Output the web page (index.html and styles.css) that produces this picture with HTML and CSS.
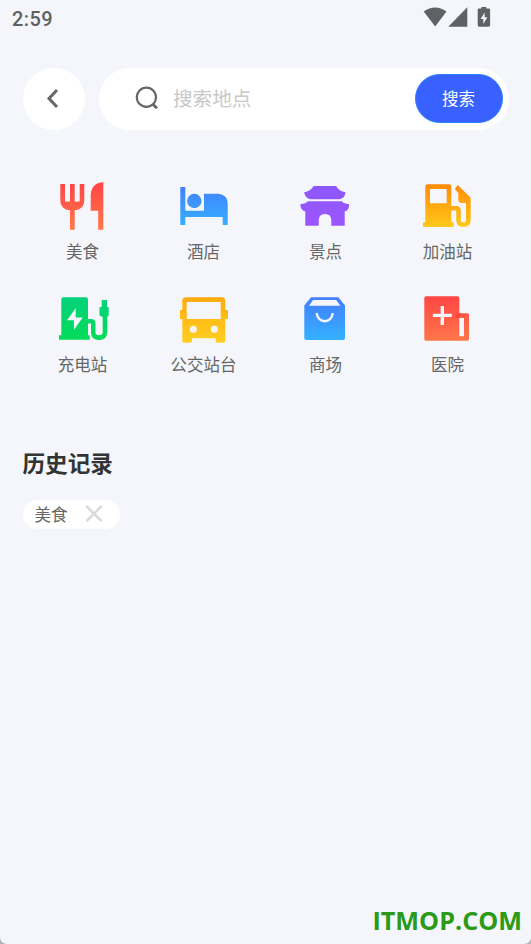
FILE: index.html
```html
<!DOCTYPE html>
<html lang="zh-CN">
<head>
<meta charset="utf-8">
<title>搜索地点</title>
<link rel="stylesheet" href="styles.css">
</head>
<body>
<div class="screen">
  <header class="status">
    <span class="time">2:59</span>
    <svg class="status-icons" width="70" height="22" viewBox="0 0 70 22" fill="#606164">
      <path d="M1.700 5.500Q13-2.500 24.500 5.500L13.200 20.500Z"/>
      <path d="M45.300 1.300V20.700H26.300Z"/>
      <path fill-rule="evenodd" d="M59.400 1h4.800v1.600h2.500q1.400 0 1.400 1.400V19.300q0 1.400-1.400 1.400h-9.600q-1.400 0-1.400-1.400V4q0-1.400 1.400-1.400h2.300ZM62.600 6.500L58.600 13H61.300v5L65.400 11.300h-2.800Z"/>
    </svg>
  </header>

  <div class="search-row">
    <button class="back" aria-label="返回">
      <svg width="20" height="24" viewBox="0 0 20 24" fill="none" stroke="#666" stroke-width="3"><path d="M13 3L5 11.500L13 20"/></svg>
    </button>
    <div class="search-box">
      <svg width="26" height="26" viewBox="0 0 26 26" fill="none" stroke="#666" stroke-width="2.200"><circle cx="12.400" cy="11.300" r="9.600"/><path d="M18.600 18L23 22.300" stroke-width="3"/></svg>
      <span class="placeholder">搜索地点</span>
      <button class="submit">搜索</button>
    </div>
  </div>

  <svg class="defs" width="0" height="0">
    <defs>
      <linearGradient id="red" gradientUnits="userSpaceOnUse" x1="0" y1="5" x2="0" y2="51"><stop stop-color="#ff4545"/><stop offset="1" stop-color="#ff7849"/></linearGradient>
      <linearGradient id="blue" gradientUnits="userSpaceOnUse" x1="0" y1="7" x2="0" y2="49"><stop stop-color="#427fff"/><stop offset="1" stop-color="#35b1ff"/></linearGradient>
      <linearGradient id="purple" gradientUnits="userSpaceOnUse" x1="0" y1="8" x2="0" y2="48"><stop stop-color="#8c58fc"/><stop offset="1" stop-color="#9e55ff"/></linearGradient>
      <linearGradient id="orange" gradientUnits="userSpaceOnUse" x1="0" y1="6" x2="0" y2="49"><stop stop-color="#ff8a06"/><stop offset="1" stop-color="#ffc81c"/></linearGradient>
      <linearGradient id="green" gradientUnits="userSpaceOnUse" x1="0" y1="6" x2="0" y2="49"><stop stop-color="#04d17b"/><stop offset="1" stop-color="#04dc58"/></linearGradient>
      <linearGradient id="amber" gradientUnits="userSpaceOnUse" x1="0" y1="6" x2="0" y2="52"><stop stop-color="#ffaa0d"/><stop offset="1" stop-color="#ffd022"/></linearGradient>
    </defs>
  </svg>

  <nav class="categories">
    <a class="category">
      <svg class="icon" viewBox="0 0 60 56" fill="url(#red)"><path d="M8.300 6H13V23.500H18V6H22.700V23.500H27.700V6H32.300V22.500Q32.300 31.500 22.700 32.300V51.700H18V32.300Q8.300 31.500 8.300 22.500ZM51.300 4.300V51.700H46.200V32.700H38.700V17Q39.500 5 51.300 4.300Z"/></svg>
      <span>美食</span>
    </a>
    <a class="category">
      <svg class="icon" viewBox="0 0 60 56" fill="url(#blue)"><path d="M7.300 9H12.300V32.700H31V15.700H45Q54.700 16.500 54.700 26V47H49.700V39H12.300V47H7.300Z"/><circle cx="21.300" cy="23" r="7.200"/></svg>
      <span>酒店</span>
    </a>
    <a class="category">
      <svg class="icon" viewBox="0 0 60 56" fill="url(#purple)"><path d="M18.700 8H41Q44 13.500 50.500 14.200Q50 20.500 44.300 21.300H15.700Q10 20.500 9.200 14.200Q15.500 13.500 18.700 8ZM13 23.300H46.700Q49.500 26.700 54 26Q54.500 32 49.700 33.500V47.700H36.300V42Q36 36 30 36Q24 36 23.700 42V47.700H10.300V33.500Q5 32 5.500 26Q10 26.700 13 23.300Z"/></svg>
      <span>景点</span>
    </a>
    <a class="category">
      <svg class="icon" viewBox="0 0 60 56" fill="url(#orange)"><path fill-rule="evenodd" d="M10.500 6.300H32Q34.300 6.300 34.300 8.500V28H39.500Q43.800 28 43.800 32.500V42Q43.800 44.500 46.400 44.500Q49 44.500 49 42V25H44Q41.300 24.500 41.300 22V15L37.800 11L40.700 7L52.500 18.500Q53.700 19.700 53.700 21.500V42Q53.700 49 46.400 49Q39.200 49 39.200 42V32.500H34.300V44.300H35.500Q36.700 44.300 36.700 45.500V49H6V45.500Q6 44.300 7.200 44.300H8.300V8.500Q8.300 6.300 10.500 6.300ZM13 11V25.300H29.700V11Z"/></svg>
      <span>加油站</span>
    </a>
    <a class="category">
      <svg class="icon" viewBox="0 0 60 56" fill="url(#green)"><path fill-rule="evenodd" d="M11.500 6.300H34Q36 6.300 36 8.500V28H39Q43.500 28 43.500 32.500V41.500Q43.500 44.300 47 44.300Q50.700 44.300 50.700 41V26L47.500 24.500V16H49.700V9H55V16H56.700V24.500L55.300 26V41Q55.300 48.900 47 48.900Q39 48.900 39 41.500V32.500H36V44.300H37.700V48.700H7V44.300H9.300V8.500Q9.300 6.300 11.500 6.300ZM23.700 17.300L15 29.300H22V38.700L30.700 26.500H23.700Z"/></svg>
      <span>充电站</span>
    </a>
    <a class="category">
      <svg class="icon" viewBox="0 0 60 56" fill="url(#amber)"><path fill-rule="evenodd" d="M13 6.300H48.500Q52.300 6.300 52.300 10V19H55V28H52.300V50Q52.300 51.700 50.500 51.700H44.500Q42.700 51.700 42.700 50V47.300H19V50Q19 51.700 17.200 51.700H11Q9.300 51.700 9.300 50V28H7V19H9.300V10Q9.300 6.300 13 6.300ZM13.700 11V28H47.700V11ZM16.800 38.300a3.500 3.500 0 1 0 7 0a3.500 3.500 0 1 0-7 0M37.800 38.300a3.500 3.500 0 1 0 7 0a3.500 3.500 0 1 0-7 0"/></svg>
      <span>公交站台</span>
    </a>
    <a class="category">
      <svg class="icon" viewBox="0 0 60 56" fill="url(#blue)"><path fill-rule="evenodd" d="M16 6.300H43.300L50 14.500V47Q50 49 48 49H11.300Q9.300 49 9.300 47V14.500ZM18 9L14 14.700H45.300L41.300 9Z"/><path d="M21.700 22C22.500 33 37 33 37.700 22" fill="none" stroke="#f4f6fb" stroke-width="2.400"/></svg>
      <span>商场</span>
    </a>
    <a class="category">
      <svg class="icon" viewBox="0 0 60 56" fill="url(#red)"><path fill-rule="evenodd" d="M9 5.300H40.500Q42.300 5.300 42.300 7V22.300H50.500Q52 22.300 52 23.800V48Q52 49.700 50.300 49.700H9Q7.300 49.700 7.300 48V7Q7.300 5.300 9 5.300ZM42.300 27V45.300H47V27ZM23.600 15V22.700H15.800V26H23.600V34H27V26H34.800V22.700H27V15Z"/><path fill="#ff4143" d="M38.500 22.500H45L42.300 26.500H38.500Z"/></svg>
      <span>医院</span>
    </a>
  </nav>

  <section class="history">
    <h2>历史记录</h2>
    <div class="chip">
      <span>美食</span>
      <svg width="18" height="18" viewBox="0 0 18 18" stroke="#d8d8d8" stroke-width="2.400"><path d="M1.500 1.200L16.500 16.200M16.500 1.200L1.500 16.200"/></svg>
    </div>
  </section>

  <div class="watermark">ITMOP.COM</div>
</div>
</body>
</html>
```

FILE: styles.css
```css
* {
  box-sizing: border-box;
}

body {
  margin: 0;
  background: #b4b5b8;
  font-family: "Noto Sans CJK SC", sans-serif;
  color: #666;
}

button {
  border: 0;
  padding: 0;
  font-family: inherit;
}

svg {
  display: block;
  flex: none;
}

.screen {
  height: 944px;
  display: flex;
  flex-direction: column;
  background: #f4f6fb;
  border-radius: 0 0 7px 7px;
  overflow: hidden;
}

.status {
  height: 68px;
  padding: 6px 39px 0 12px;
  display: flex;
  justify-content: space-between;
}

.time {
  padding-top: 1px;
  font: 500 20px/25px Roboto, sans-serif;
  letter-spacing: 0.4px;
  color: #606164;
}

.search-row {
  display: flex;
  gap: 14px;
  padding: 0 22.5px;
}

.back {
  width: 62px;
  height: 61.7px;
  border-radius: 31px;
  background: #fff;
  display: flex;
  align-items: center;
  justify-content: center;
}

.search-box {
  flex: 1;
  height: 61.7px;
  border-radius: 31px;
  background: #fff;
  display: flex;
  align-items: center;
  padding: 0 6px 0 35px;
}

.placeholder {
  flex: 1;
  margin-left: 13.5px;
  padding-bottom: 3px;
  font-size: 19.6px;
  color: #c8c8c8;
}

.submit {
  width: 88px;
  height: 49px;
  padding-bottom: 2px;
  border: 1px solid #2c83ff;
  border-radius: 25px;
  background: #3961ff;
  color: #fff;
  font-size: 16.5px;
}

.defs {
  height: 0;
}

.categories {
  display: grid;
  grid-template-columns: 122px 120px 124px 120px;
  grid-auto-rows: 113px;
  padding: 48.3px 0 0 21px;
}

.category {
  display: flex;
  flex-direction: column;
  align-items: center;
  font-size: 16.5px;
  line-height: 24px;
}

.category span {
  padding-left: 1px;
}

.icon {
  width: 60px;
  height: 56px;
  margin-bottom: 5px;
}

.history {
  padding: 42px 22.5px 0;
}

.history h2 {
  margin: 0 0 21px;
  font-size: 22.6px;
  line-height: 33px;
  font-weight: 700;
  color: #333;
}

.chip {
  width: 97.5px;
  height: 29px;
  border-radius: 15px;
  background: #fff;
  display: flex;
  align-items: center;
  justify-content: space-between;
  padding: 0 17px 1px 12px;
  font-size: 16.5px;
}

.watermark {
  margin-top: auto;
  padding: 0 9px 7px 0;
  text-align: right;
  font: 700 25.2px/34px "Open Sans", sans-serif;
  color: #2b9a17;
}
```
